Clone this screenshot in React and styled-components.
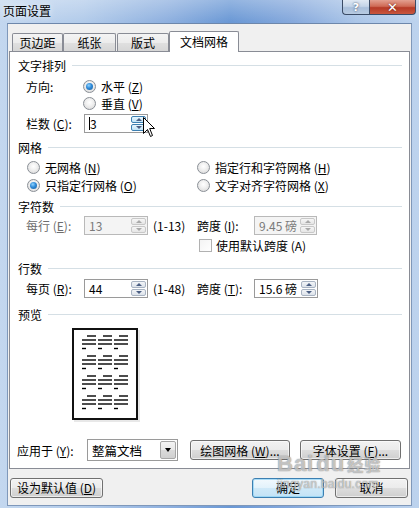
import React from 'react';
import styled, { createGlobalStyle, css } from 'styled-components';

const Global = createGlobalStyle`
  html, body { margin: 0; padding: 0; }
  body {
    width: 419px; height: 508px; overflow: hidden;
    font-family: "Noto Sans CJK SC", "Liberation Sans", sans-serif;
    font-size: 12px; color: #000;
  }
  * { box-sizing: border-box; }
  u { text-decoration: underline; text-underline-offset: 1px; }
`;

const Window = styled.div`
  position: relative;
  width: 419px;
  height: 508px;
  display: flex;
  flex-direction: column;
  padding-bottom: 2px;
  background:
    linear-gradient(180deg, rgba(255,255,255,0.28) 0px, rgba(255,255,255,0) 22px),
    linear-gradient(90deg, #c3d7ef 0%, #b2cbea 20%, #8eb0df 40%, #6a98d5 55%, #86a9dc 70%, #aac5e8 85%, #bdd3ee 100%);
`;

const TitleBar = styled.div`
  height: 23px;
  display: flex;
  justify-content: space-between;
  align-items: flex-start;
  padding: 0 3px 0 3px;
`;

const Title = styled.div`
  line-height: 22px;
  font-size: 12px;
  color: #000;
  text-shadow: 0 0 6px rgba(255,255,255,0.9);
`;

const CaptionButtons = styled.div`
  display: flex;
`;

const CaptionBtn = styled.div`
  height: 15px;
  display: flex;
  align-items: center;
  justify-content: center;
  color: #fff;
  font-weight: bold;
  font-family: "DejaVu Sans", sans-serif;
  border: 1px solid #3a4b66;
  border-top: none;
  ${(p) => p.close ? css`
    width: 47px;
    border-radius: 0 0 4px 0;
    background: linear-gradient(180deg, #e3a090 0%, #cf6a55 45%, #b63a26 55%, #c9573f 100%);
    font-size: 13px;
    text-shadow: 0 0 2px #5a1a10;
  ` : css`
    width: 27px;
    border-right: none;
    border-radius: 0 0 0 4px;
    background: linear-gradient(180deg, #dfe8f3 0%, #c4d4e8 45%, #a9bfdb 55%, #b8cbe2 100%);
    font-size: 11px;
    text-shadow: 0 0 2px #2a3a55;
  `}
`;

const Client = styled.div`
  flex: 1;
  margin: 0 7px;
  background: #f0f0f0;
  border: 1px solid #7f98ba;
  border-top-color: #6d87ab;
  display: flex;
  flex-direction: column;
`;

const TabRow = styled.div`
  display: flex;
  align-items: flex-end;
  height: 20px;
  margin-top: 7px;
  padding-left: 4px;
  position: relative;
  z-index: 1;
`;

const Tab = styled.div`
  width: ${(p) => p.w}px;
  margin-left: ${(p) => p.ml || 0}px;
  display: flex;
  align-items: center;
  justify-content: center;
  border: 1px solid #898c95;
  border-bottom: none;
  border-radius: 2px 2px 0 0;
  font-size: 12px;
  ${(p) => p.active ? css`
    height: 21px;
    margin-bottom: -1px;
    background: #fff;
    padding-bottom: 2px;
  ` : css`
    height: 18px;
    background: linear-gradient(180deg, #f4f4f4 0%, #ececec 50%, #e0e0e0 51%, #d6d6d6 100%);
  `}
`;

const Panel = styled.div`
  height: 418px;
  margin: 0 1px;
  background: #fff;
  border: 1px solid #898c95;
  display: flex;
  flex-direction: column;
  padding-top: 5px;
`;

const GroupHeader = styled.div`
  height: 16px;
  margin-top: ${(p) => p.mt || 0}px;
  display: flex;
  align-items: center;
  padding: 0 7px 0 8px;
  &::after {
    content: "";
    flex: 1;
    height: 1px;
    margin-left: 6px;
    background: #d5dfe5;
  }
`;

const Row = styled.div`
  height: ${(p) => p.h}px;
  margin-top: ${(p) => p.mt || 0}px;
  padding-left: ${(p) => p.pl || 0}px;
  display: flex;
  align-items: center;
  white-space: nowrap;
`;

const Label = styled.span`
  width: ${(p) => (p.w ? `${p.w}px` : 'auto')};
  margin-left: ${(p) => p.ml || 0}px;
  flex-shrink: 0;
  color: ${(p) => (p.dim ? '#6d6d6d' : '#000')};
`;

const RadioWrap = styled.span`
  display: flex;
  align-items: center;
  width: ${(p) => (p.w ? `${p.w}px` : 'auto')};
  gap: 5px;
`;

const RadioDot = styled.span`
  width: 13px;
  height: 13px;
  border-radius: 50%;
  border: 1px solid #8a8f96;
  background: radial-gradient(circle at 50% 40%, #ffffff 0%, #f1f1f1 40%, #d4d4d4 100%);
  display: flex;
  align-items: center;
  justify-content: center;
  flex-shrink: 0;
  &::after {
    content: "";
    display: ${(p) => (p.on ? 'block' : 'none')};
    width: 7px;
    height: 7px;
    border-radius: 50%;
    background: radial-gradient(circle at 40% 35%, #8fd3ff 0%, #2f8ad8 45%, #1b5e9b 100%);
  }
`;

const Radio = ({ on, children, w }) => (
  <RadioWrap w={w}>
    <RadioDot on={on} />
    <span>{children}</span>
  </RadioWrap>
);

const CheckBox = styled.span`
  width: 13px;
  height: 13px;
  border: 1px solid #b1b1b1;
  background: linear-gradient(135deg, #f4f4f4 0%, #ffffff 100%);
  margin-right: 4px;
  flex-shrink: 0;
`;

const InputBox = styled.div`
  width: ${(p) => p.w}px;
  height: 19px;
  flex-shrink: 0;
  display: flex;
  align-items: stretch;
  border: 1px solid ${(p) => (p.disabled ? '#b9b9b9' : '#9a9a9a')};
  background: ${(p) => (p.disabled ? '#f4f4f4' : '#fff')};
  color: ${(p) => (p.disabled ? '#7a7a7a' : '#000')};
  padding: 1px;
`;

const InputValue = styled.span`
  flex: 1;
  display: flex;
  align-items: center;
  padding-left: 3px;
  font-size: 12px;
  line-height: 15px;
  overflow: hidden;
`;

const Caret = styled.span`
  width: 1px;
  height: 13px;
  background: #000;
  margin-right: 0px;
`;

const Spinner = styled.div`
  width: 15px;
  display: flex;
  flex-direction: column;
  gap: 1px;
`;

const SpinHalf = styled.div`
  flex: 1;
  display: flex;
  align-items: center;
  justify-content: center;
  border: 1px solid ${(p) => (p.hot ? '#3c7fb1' : p.disabled ? '#c8c8c8' : '#a8b3c2')};
  border-radius: 2px;
  background: ${(p) => p.hot
    ? 'linear-gradient(180deg, #e8f6fd 0%, #c1e4f8 100%)'
    : p.disabled
      ? 'linear-gradient(180deg, #f6f6f6 0%, #e6e6e6 100%)'
      : 'linear-gradient(180deg, #f2f4f7 0%, #dde3ea 100%)'};
  &::after {
    content: "";
    width: 0;
    height: 0;
    border-left: 3px solid transparent;
    border-right: 3px solid transparent;
    ${(p) => p.down
      ? css`border-top: 3px solid ${p.disabled ? '#a9a9a9' : '#4b5f84'};`
      : css`border-bottom: 3px solid ${p.disabled ? '#a9a9a9' : '#4b5f84'};`}
  }
`;

const SpinInput = ({ w, value, disabled, hot, caret }) => (
  <InputBox w={w} disabled={disabled}>
    <InputValue>
      {caret && <Caret />}
      {value}
    </InputValue>
    <Spinner>
      <SpinHalf disabled={disabled} hot={hot} />
      <SpinHalf disabled={disabled} hot={hot} down />
    </Spinner>
  </InputBox>
);

const PreviewWrap = styled.div`
  margin-top: 6px;
  margin-left: 62px;
  width: 68px;
  height: 94px;
  flex-shrink: 0;
`;

const Select = styled.div`
  width: 91px;
  height: 22px;
  flex-shrink: 0;
  display: flex;
  border: 1px solid #9a9a9a;
  background: #fff;
  padding: 1px;
`;

const SelectValue = styled.span`
  flex: 1;
  display: flex;
  align-items: center;
  padding-left: 3px;
  font-size: 12.5px;
`;

const SelectArrow = styled.span`
  width: 16px;
  display: flex;
  align-items: center;
  justify-content: center;
  border: 1px solid #a6a6a6;
  border-radius: 2px;
  background: linear-gradient(180deg, #f4f4f4 0%, #e9e9e9 50%, #dadada 51%, #d0d0d0 100%);
  &::after {
    content: "";
    border-left: 3px solid transparent;
    border-right: 3px solid transparent;
    border-top: 4px solid #000;
  }
`;

const Button = styled.div`
  width: ${(p) => p.w}px;
  height: 20px;
  margin-left: ${(p) => p.ml || 0}px;
  flex-shrink: 0;
  display: flex;
  align-items: center;
  justify-content: center;
  border-radius: 3px;
  font-size: 12px;
  white-space: nowrap;
  ${(p) => p.primary ? css`
    border: 1px solid #3c7fb1;
    background: linear-gradient(180deg, #f2f9fd 0%, #e2f2fb 50%, #cfe9f8 51%, #c3e3f6 100%);
    box-shadow: inset 0 0 0 1px rgba(140, 210, 245, 0.7);
  ` : css`
    border: 1px solid #707070;
    background: linear-gradient(180deg, #f2f2f2 0%, #ebebeb 50%, #dddddd 51%, #cfcfcf 100%);
    box-shadow: inset 0 0 0 1px rgba(255,255,255,0.6);
  `}
`;

const BottomRow = styled.div`
  display: flex;
  align-items: center;
  margin-top: 8px;
  height: 21px;
  padding-left: 2px;
`;

const Spacer = styled.div`
  flex: 1;
`;

const Watermark = styled.div`
  position: absolute;
  left: 277px;
  top: 452px;
  pointer-events: none;
  color: rgba(255, 255, 255, 0.55);
  text-shadow: 0 0 1px rgba(90, 90, 90, 0.55), 0 0 1px rgba(90, 90, 90, 0.55);
  display: flex;
  flex-direction: column;
  align-items: flex-start;
  z-index: 5;
`;

const WmBig = styled.div`
  font-family: "Liberation Sans", sans-serif;
  font-weight: bold;
  font-size: 22px;
  line-height: 24px;
  letter-spacing: 1px;
  display: flex;
  align-items: baseline;
  gap: 2px;
`;

const WmCn = styled.span`
  font-family: "Noto Sans CJK SC", sans-serif;
  font-size: 16px;
  font-weight: bold;
`;

const WmSmall = styled.div`
  font-family: "Liberation Sans", sans-serif;
  font-size: 12px;
  margin-top: 1px;
  letter-spacing: 0.3px;
`;

const Cursor = styled.svg`
  position: absolute;
  left: 143px;
  top: 117px;
  z-index: 6;
`;

const Preview = () => {
  const cols = [10, 26, 42];
  const groups = [8, 28, 48, 68];
  const lines = [];
  groups.forEach((gy) => {
    cols.forEach((cx) => {
      lines.push([cx + 5, cx + 14, gy]);
      lines.push([cx, cx + 14, gy + 4]);
      lines.push([cx, cx + 14, gy + 8]);
      lines.push([cx, cx + 4, gy + 12.5]);
    });
  });
  return (
    <PreviewWrap>
      <svg width="68" height="94" viewBox="0 0 68 94">
        <rect x="2" y="2" width="66" height="92" fill="#d8d8d8" opacity="0.6" />
        <rect x="1" y="1" width="64" height="90" fill="#fff" stroke="#111" strokeWidth="2" />
        {lines.map(([x1, x2, y], i) => (
          <line key={i} x1={x1} x2={x2} y1={y} y2={y} stroke="#000" strokeWidth="1.4" />
        ))}
      </svg>
    </PreviewWrap>
  );
};

export default function App() {
  return (
    <>
      <Global />
      <Window>
        <TitleBar>
          <Title>页面设置</Title>
          <CaptionButtons>
            <CaptionBtn>?</CaptionBtn>
            <CaptionBtn close>✕</CaptionBtn>
          </CaptionButtons>
        </TitleBar>
        <Client>
          <TabRow>
            <Tab w={51}>页边距</Tab>
            <Tab w={53}>纸张</Tab>
            <Tab w={52} ml={1}>版式</Tab>
            <Tab w={70} active>文档网格</Tab>
          </TabRow>
          <Panel>
            <GroupHeader>文字排列</GroupHeader>
            <Row h={18} mt={4} pl={16}>
              <Label w={57}>方向:</Label>
              <Radio on>水平 (<u>Z</u>)</Radio>
            </Row>
            <Row h={16} pl={73}>
              <Radio>垂直 (<u>V</u>)</Radio>
            </Row>
            <Row h={19} mt={3} pl={16}>
              <Label w={58}>栏数 (<u>C</u>):</Label>
              <SpinInput w={64} value="3" hot caret />
            </Row>

            <GroupHeader mt={6}>网格</GroupHeader>
            <Row h={18} mt={3} pl={17}>
              <Radio w={170}>无网格 (<u>N</u>)</Radio>
              <Radio>指定行和字符网格 (<u>H</u>)</Radio>
            </Row>
            <Row h={18} pl={17}>
              <Radio w={170} on>只指定行网格 (<u>O</u>)</Radio>
              <Radio>文字对齐字符网格 (<u>X</u>)</Radio>
            </Row>

            <GroupHeader mt={4}>字符数</GroupHeader>
            <Row h={19} mt={2} pl={16}>
              <Label w={58} dim>每行 (<u>E</u>):</Label>
              <SpinInput w={64} value="13" disabled />
              <Label w={44} ml={5}>(1-13)</Label>
              <Label w={57}>跨度 (<u>I</u>):</Label>
              <SpinInput w={63} value="9.45 磅" disabled />
            </Row>
            <Row h={16} mt={2} pl={189}>
              <CheckBox />
              <Label>使用默认跨度 (A)</Label>
            </Row>

            <GroupHeader mt={7}>行数</GroupHeader>
            <Row h={19} mt={3} pl={16}>
              <Label w={58}>每页 (<u>R</u>):</Label>
              <SpinInput w={64} value="44" />
              <Label w={44} ml={5}>(1-48)</Label>
              <Label w={57}>跨度 (<u>T</u>):</Label>
              <SpinInput w={64} value="15.6 磅" />
            </Row>

            <GroupHeader mt={8}>预览</GroupHeader>
            <Preview />

            <Row h={22} mt={17} pl={7}>
              <Label w={70}>应用于 (<u>Y</u>):</Label>
              <Select>
                <SelectValue>整篇文档</SelectValue>
                <SelectArrow />
              </Select>
              <Button w={100} ml={12}>绘图网格 (<u>W</u>)...</Button>
              <Button w={101} ml={10}>字体设置 (<u>F</u>)...</Button>
            </Row>
          </Panel>
          <BottomRow>
            <Button w={93}>设为默认值 (<u>D</u>)</Button>
            <Spacer />
            <Button w={72} primary>确定</Button>
            <Button w={73} ml={11}>取消</Button>
            <Spacer style={{ flex: '0 0 3px' }} />
          </BottomRow>
        </Client>
        <Watermark>
          <WmBig>Bai<span>du</span><WmCn>经验</WmCn></WmBig>
          <WmSmall>jingyan.baidu.com</WmSmall>
        </Watermark>
        <Cursor width="13" height="21" viewBox="0 0 13 21">
          <path d="M0.5 0.5 L0.5 16.5 L4.5 12.5 L7.5 19.5 L9.5 18.5 L6.7 11.5 L11.5 11.5 Z" fill="#fff" stroke="#000" strokeWidth="1" strokeLinejoin="miter" />
        </Cursor>
      </Window>
    </>
  );
}
